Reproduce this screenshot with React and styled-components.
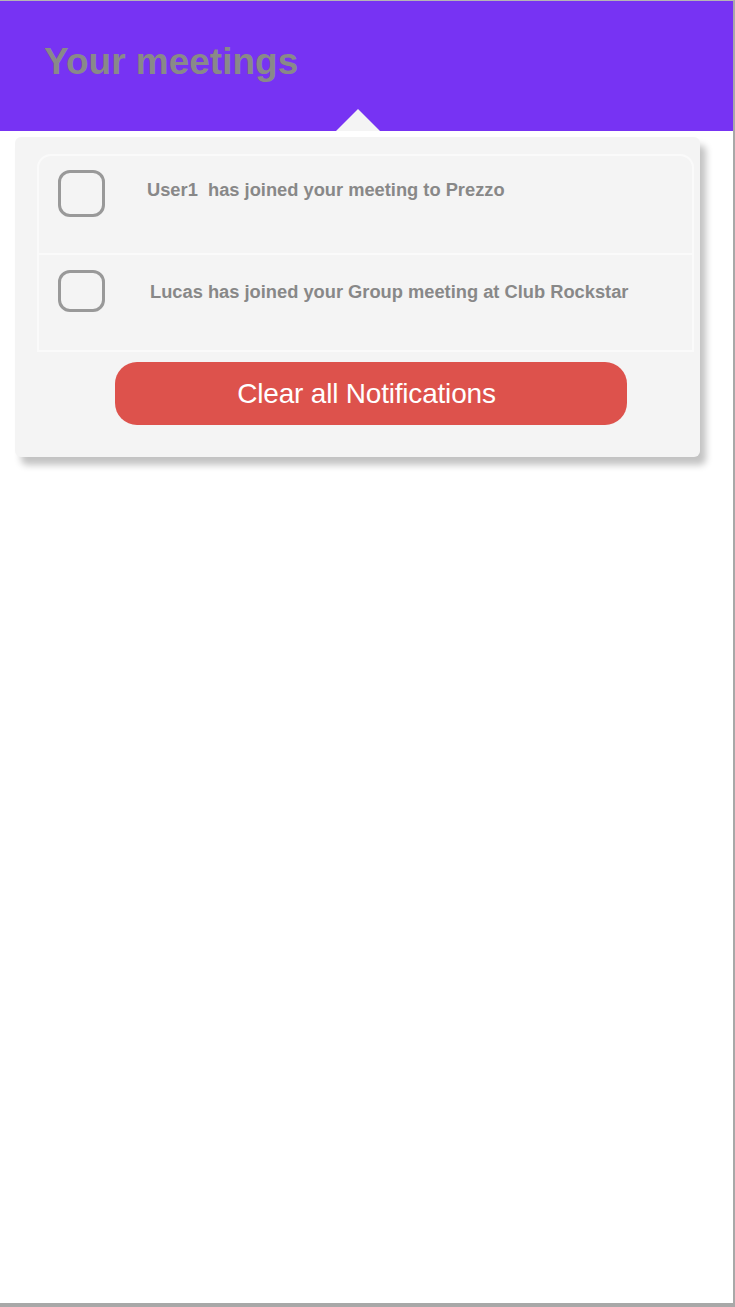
import React from 'react'
import styled, { createGlobalStyle } from 'styled-components'

const Global = createGlobalStyle`
  html, body { margin: 0; padding: 0; background: #fff; }
  body { font-family: "Liberation Sans", Arial, sans-serif; }
`;

const Frame = styled.div`
  box-sizing: border-box;
  width: 735px;
  height: 1307px;
  border-top: 1px solid #b5b5b5;
  border-right: 2px solid #a8a8a8;
  border-bottom: 4px solid #a8a8a8;
  overflow: hidden;
`;

const Header = styled.header`
  position: relative;
  height: 130px;
  background: #7733f3;
  padding-left: 44px;
  box-sizing: border-box;
  display: flex;
  align-items: center;
`;

const Title = styled.h1`
  margin: 0 0 8px;
  font-size: 37px;
  font-weight: 700;
  color: #898989;
`;

const Arrow = styled.div`
  position: absolute;
  left: 336px;
  bottom: 0;
  width: 0;
  height: 0;
  border-left: 22px solid transparent;
  border-right: 22px solid transparent;
  border-bottom: 22px solid #f4f4f4;
`;

const Panel = styled.div`
  margin: 6px 0 0 15px;
  width: 685px;
  box-sizing: border-box;
  background: #f4f4f4;
  border-radius: 6px;
  box-shadow: 6px 8px 7px rgba(0, 0, 0, 0.24);
  padding: 17px 6px 32px 22px;
`;

const List = styled.ul`
  list-style: none;
  margin: 0;
  padding: 0;
  border: 2px solid #fafafa;
  border-radius: 14px 14px 0 0;
`;

const Row = styled.li`
  height: 97px;
  display: flex;
  align-items: flex-start;
  padding: ${p => p.$top}px 0 0 19px;
  box-sizing: border-box;
  & + & { border-top: 2px solid #fafafa; }
`;

const Check = styled.span`
  flex: none;
  width: 47px;
  height: ${p => p.$h}px;
  box-sizing: border-box;
  border: 3px solid #999;
  border-radius: 12px;
  filter: blur(0.6px);
`;

const Text = styled.span`
  margin-left: ${p => p.$ml}px;
  margin-top: ${p => p.$mt}px;
  font-size: 18.3px;
  font-weight: 700;
  color: #888;
  white-space: pre;
`;

const ButtonRow = styled.div`
  display: flex;
  justify-content: center;
  padding: 10px 0 0;
  margin-left: 10px;
`;

const Button = styled.button`
  width: 512px;
  height: 63px;
  padding: 0 8px 0 0;
  border: none;
  border-radius: 22px;
  background: #dd524c;
  color: #fff;
  font-family: "Liberation Sans", Arial, sans-serif;
  font-size: 28px;
  letter-spacing: -0.2px;
  cursor: pointer;
`;

export default function App() {
  return (
    <>
      <Global />
      <Frame>
        <Header>
          <Title>Your meetings</Title>
          <Arrow />
        </Header>
        <Panel>
          <List>
            <Row $top={14}>
              <Check $h={47} />
              <Text $ml={42} $mt={9}>User1  has joined your meeting to Prezzo</Text>
            </Row>
            <Row $top={15}>
              <Check $h={42} />
              <Text $ml={45} $mt={11}>Lucas has joined your Group meeting at Club Rockstar</Text>
            </Row>
          </List>
          <ButtonRow>
            <Button>Clear all Notifications</Button>
          </ButtonRow>
        </Panel>
      </Frame>
    </>
  )
}
